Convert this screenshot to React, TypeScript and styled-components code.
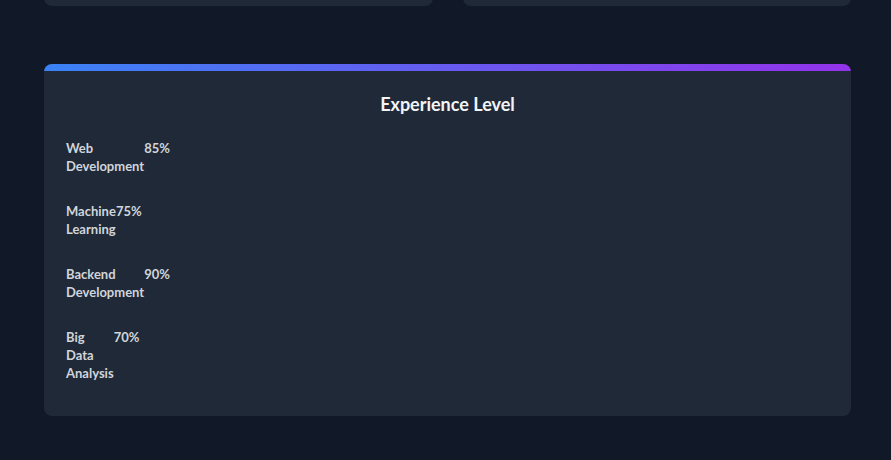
import React from "react";
import styled, { createGlobalStyle } from "styled-components";

const Global = createGlobalStyle`
  html, body { margin: 0; padding: 0; background: #111827; }
  body { font-family: Lato, "Noto Sans", sans-serif; color: #d1d5db; }
`;

const Page = styled.div`
  padding: 0 40px 44px 44px;
  margin-top: -20px;
  display: flex;
  flex-direction: column;
  gap: 58px;
`;

const TopRow = styled.div`
  display: grid;
  grid-template-columns: 1fr 1fr;
  gap: 30px;
`;

const SmallCard = styled.div`
  height: 26px;
  background: #1f2937;
  border-radius: 8px;
`;

const Card = styled.section`
  background: #1f2937;
  border-radius: 8px;
  overflow: hidden;
`;

const Accent = styled.div`
  height: 7px;
  background: linear-gradient(90deg, #3b82f6, #9333ea);
`;

const Body = styled.div`
  padding: 20px 22px 34px;
`;

const Title = styled.h2`
  margin: 0 0 21px;
  text-align: center;
  font-size: 18px;
  line-height: 27px;
  font-weight: 700;
  color: #f3f4f6;
`;

const List = styled.div`
  display: flex;
  flex-direction: column;
  align-items: flex-start;
  gap: 27px;
`;

const Skill = styled.div`
  width: min-content;
`;

const Head = styled.div`
  display: flex;
  justify-content: space-between;
  font-size: 13px;
  line-height: 18px;
  font-weight: 700;
  color: #d1d5db;
`;

const Bar = styled.div`
  height: 0;
  background: #374151;
  border-radius: 4px;
`;

const Fill = styled.div`
  height: 100%;
  background: linear-gradient(90deg, #3b82f6, #9333ea);
`;

const skills = [
  { name: "Web Development", level: 85 },
  { name: "Machine Learning", level: 75 },
  { name: "Backend Development", level: 90 },
  { name: "Big Data Analysis", level: 70 },
];

export default function App() {
  return (
    <>
      <Global />
      <Page>
        <TopRow>
          <SmallCard />
          <SmallCard />
        </TopRow>
        <Card>
          <Accent />
          <Body>
            <Title>Experience Level</Title>
            <List>
              {skills.map((s) => (
                <Skill key={s.name}>
                  <Head>
                    <span>{s.name}</span>
                    <span>{s.level}%</span>
                  </Head>
                  <Bar>
                    <Fill style={{ width: `${s.level}%` }} />
                  </Bar>
                </Skill>
              ))}
            </List>
          </Body>
        </Card>
      </Page>
    </>
  );
}
